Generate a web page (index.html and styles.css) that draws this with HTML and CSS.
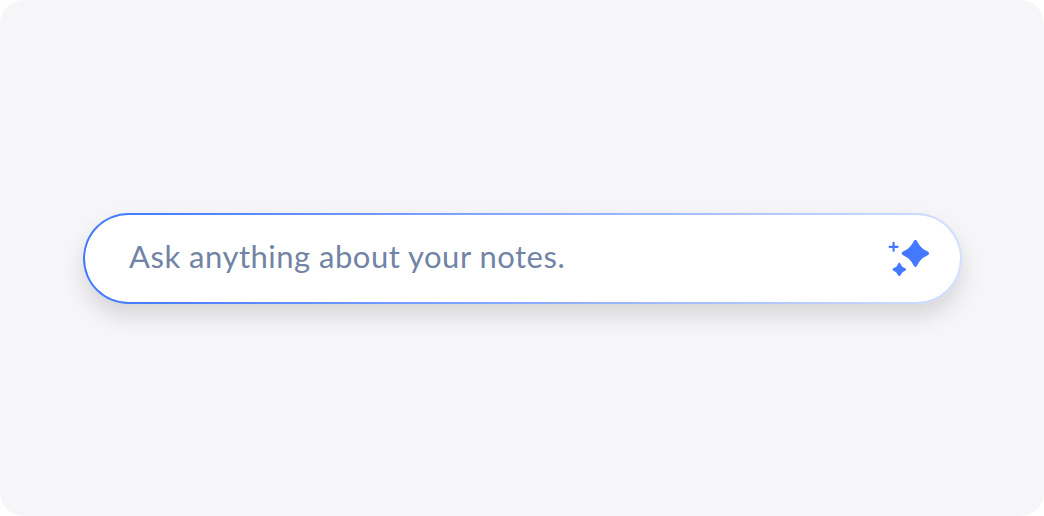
FILE: index.html
```
<!DOCTYPE html>
<html lang="en">
<head>
  <meta charset="UTF-8" />
  <meta name="viewport" content="width=device-width, initial-scale=1.0" />
  <title>Ask your notes</title>
  <link rel="stylesheet" href="styles.css">
</head>
<body>

<main class="panel">
  <form class="ask-bar">
    <input class="ask-input" type="text" placeholder="Ask anything about your notes." aria-label="Ask anything about your notes." />
    <button class="ask-button" type="button" aria-label="Ask">
      <svg class="sparkles" viewBox="0 0 42 38" aria-hidden="true">
        <path class="star" d="M27.4 1C28.4 1 28.8 1.6 29.3 2.5C31.3 6.8 34 9.8 38.8 12.1C40.2 12.8 41 13.3 41 14.4C41 15.5 40.2 16 38.8 16.7C34 19 31.5 21.8 29.3 26.3C28.8 27.3 28.4 27.9 27.4 27.9C26.4 27.9 26 27.3 25.5 26.3C23.3 21.8 20.8 19 16 16.7C14.6 16 13.8 15.5 13.8 14.4C13.8 13.3 14.6 12.8 16 12.1C20.8 9.8 23.5 6.8 25.5 2.5C26 1.6 26.4 1 27.4 1Z"/>
        <path class="star" d="M11.3 23.8C12 23.8 12.2 24.2 12.6 24.9C13.4 26.8 14.5 28 16.7 29.1C17.5 29.5 18 29.8 18 30.5C18 31.2 17.5 31.5 16.7 31.9C14.5 33 13.4 34.2 12.6 36.1C12.2 36.8 12 37.2 11.3 37.2C10.6 37.2 10.4 36.8 10 36.1C9.2 34.2 8.1 33 5.9 31.9C5.1 31.5 4.6 31.2 4.6 30.5C4.6 29.8 5.1 29.5 5.9 29.1C8.1 28 9.2 26.8 10 24.9C10.4 24.2 10.6 23.8 11.3 23.8Z"/>
        <path class="plus" d="M5.6 3.8V11.8M1.6 7.8H9.6"/>
      </svg>
    </button>
  </form>
</main>

</body>
</html>
```
FILE: styles.css
```
body {
  margin: 0;
  background: #fff;
}

.panel {
  height: 100vh;
  box-sizing: border-box;
  padding: 1px 0 0 1px;
  display: flex;
  align-items: center;
  justify-content: center;
  background-color: #f6f6f8;
  border-radius: 24px;
}

.ask-bar {
  box-sizing: border-box;
  width: 879px;
  height: 91px;
  padding: 0 30px 0 44px;
  display: flex;
  align-items: center;
  justify-content: space-between;
  border: 2px solid transparent;
  border-radius: 46px;
  background: linear-gradient(#fff, #fff) padding-box,
    linear-gradient(90deg, #4479ff 0%, #4d80ff 10%, #d3dfff 100%) border-box;
  box-shadow: 0 12px 22px rgba(0, 0, 0, 0.13);
}

.ask-input {
  flex: 1;
  height: 44px;
  padding: 0;
  margin-bottom: 6px;
  border: none;
  outline: none;
  background: none;
  font-family: Lato, sans-serif;
  font-size: 31px;
  letter-spacing: 0.5px;
  color: #7184a5;
}

.ask-input::placeholder {
  color: #7184a5;
  opacity: 1;
}

.ask-button {
  display: flex;
  padding: 0;
  margin-bottom: 1px;
  border: none;
  background: none;
  cursor: pointer;
}

.sparkles {
  width: 42px;
  height: 38px;
}

.star {
  fill: #4479ff;
}

.plus {
  fill: none;
  stroke: #4479ff;
  stroke-width: 2.2;
  stroke-linecap: round;
}
```
